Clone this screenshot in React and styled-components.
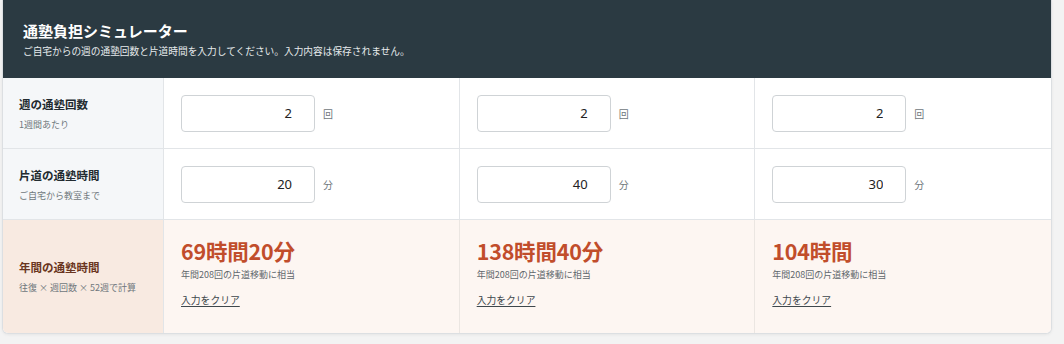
import React, { useState } from "react";
import styled, { createGlobalStyle } from "styled-components";

const Global = createGlobalStyle`
  html, body { margin: 0; padding: 0; background: #f3f3f3; }
  body { font-family: "Noto Sans CJK JP", "Noto Sans", sans-serif; }
`;

const Page = styled.div`
  padding: 0 11px 10px 2px;
`;

const Card = styled.div`
  width: 1050px;
  box-sizing: border-box;
  background: #fff;
  border: 1px solid #dcdfe2;
  border-top: none;
  border-radius: 0 0 6px 6px;
  overflow: hidden;
  box-shadow: 0 1px 3px rgba(0, 0, 0, 0.06);
`;

const Header = styled.div`
  background: #2b3a42;
  height: 78px;
  box-sizing: border-box;
  padding: 20px 0 0 20px;
  color: #fff;
`;

const Title = styled.h1`
  margin: 0;
  font-size: 15px;
  font-weight: 700;
  line-height: 22px;
`;

const Subtitle = styled.p`
  margin: 2px 0 0;
  font-size: 9.7px;
  line-height: 14px;
  color: #e6eaec;
`;

const Grid = styled.div`
  display: grid;
  grid-template-columns: 161px repeat(3, 1fr);
  grid-template-rows: 71px 71px 113px;
`;

const LabelCell = styled.div`
  display: flex;
  flex-direction: column;
  justify-content: center;
  padding: 0 0 0 16px;
  background: ${(p) => (p.$result ? "#f8eae1" : "#f5f7f9")};
  border-right: 1px solid #e2e5e8;
  border-bottom: ${(p) => (p.$last ? "none" : "1px solid #e2e5e8")};
`;

const LabelTitle = styled.div`
  font-size: 11.5px;
  font-weight: 700;
  line-height: 16px;
  color: ${(p) => (p.$result ? "#6a3520" : "#222b30")};
`;

const LabelSub = styled.div`
  margin-top: 6px;
  font-size: 9px;
  line-height: 13px;
  color: #6f777c;
`;

const InputCell = styled.div`
  display: flex;
  align-items: center;
  padding: 0 0 0 17px;
  gap: 8px;
  border-right: ${(p) => (p.$lastCol ? "none" : "1px solid #e2e5e8")};
  border-bottom: 1px solid #e2e5e8;
`;

const NumberBox = styled.input`
  width: 134px;
  height: 37px;
  box-sizing: border-box;
  border: 1px solid #cfd3d6;
  border-radius: 4px;
  padding: 0 22px 0 8px;
  text-align: right;
  font-family: "Noto Sans", sans-serif;
  font-size: 13px;
  color: #222;
  background: #fff;
  outline: none;
`;

const Unit = styled.span`
  font-size: 10px;
  color: #6f777c;
`;

const ResultCell = styled.div`
  display: flex;
  flex-direction: column;
  align-items: flex-start;
  padding: 17px 0 0 17px;
  background: #fdf6f2;
  border-right: ${(p) => (p.$lastCol ? "none" : "1px solid #ebe6e2")};
`;

const ResultValue = styled.div`
  font-size: 21.5px;
  font-weight: 700;
  line-height: 28px;
  color: #c14d2b;
  letter-spacing: -0.2px;
`;

const ResultNote = styled.div`
  margin-top: 3px;
  font-size: 9px;
  line-height: 13px;
  color: #5f676c;
`;

const ClearLink = styled.button`
  margin-top: 12px;
  padding: 0;
  border: none;
  background: none;
  font-family: inherit;
  font-size: 9.8px;
  line-height: 14px;
  color: #3e474c;
  text-decoration: underline;
  text-underline-offset: 2px;
  cursor: pointer;
`;

const initial = [
  { days: 2, minutes: 20 },
  { days: 2, minutes: 40 },
  { days: 2, minutes: 30 },
];

function formatHours(totalMin) {
  const h = Math.floor(totalMin / 60);
  const m = totalMin % 60;
  return m ? `${h}時間${m}分` : `${h}時間`;
}

export default function App() {
  const [cols, setCols] = useState(initial);

  const update = (i, key, v) =>
    setCols((c) => c.map((x, j) => (j === i ? { ...x, [key]: v } : x)));

  return (
    <Page>
      <Global />
      <Card>
        <Header>
          <Title>通塾負担シミュレーター</Title>
          <Subtitle>
            ご自宅からの週の通塾回数と片道時間を入力してください。入力内容は保存されません。
          </Subtitle>
        </Header>
        <Grid>
          <LabelCell>
            <LabelTitle>週の通塾回数</LabelTitle>
            <LabelSub>1週間あたり</LabelSub>
          </LabelCell>
          {cols.map((c, i) => (
            <InputCell key={`d${i}`} $lastCol={i === 2}>
              <NumberBox
                value={c.days}
                onChange={(e) => update(i, "days", e.target.value)}
              />
              <Unit>回</Unit>
            </InputCell>
          ))}

          <LabelCell>
            <LabelTitle>片道の通塾時間</LabelTitle>
            <LabelSub>ご自宅から教室まで</LabelSub>
          </LabelCell>
          {cols.map((c, i) => (
            <InputCell key={`m${i}`} $lastCol={i === 2}>
              <NumberBox
                value={c.minutes}
                onChange={(e) => update(i, "minutes", e.target.value)}
              />
              <Unit>分</Unit>
            </InputCell>
          ))}

          <LabelCell $result $last>
            <LabelTitle $result>年間の通塾時間</LabelTitle>
            <LabelSub>往復 × 週回数 × 52週で計算</LabelSub>
          </LabelCell>
          {cols.map((c, i) => {
            const trips = 2 * Number(c.days || 0) * 52;
            const total = trips * Number(c.minutes || 0);
            return (
              <ResultCell key={`r${i}`} $lastCol={i === 2}>
                <ResultValue>{formatHours(total)}</ResultValue>
                <ResultNote>年間{trips}回の片道移動に相当</ResultNote>
                <ClearLink onClick={() => update(i, "minutes", "")}>
                  入力をクリア
                </ClearLink>
              </ResultCell>
            );
          })}
        </Grid>
      </Card>
    </Page>
  );
}
